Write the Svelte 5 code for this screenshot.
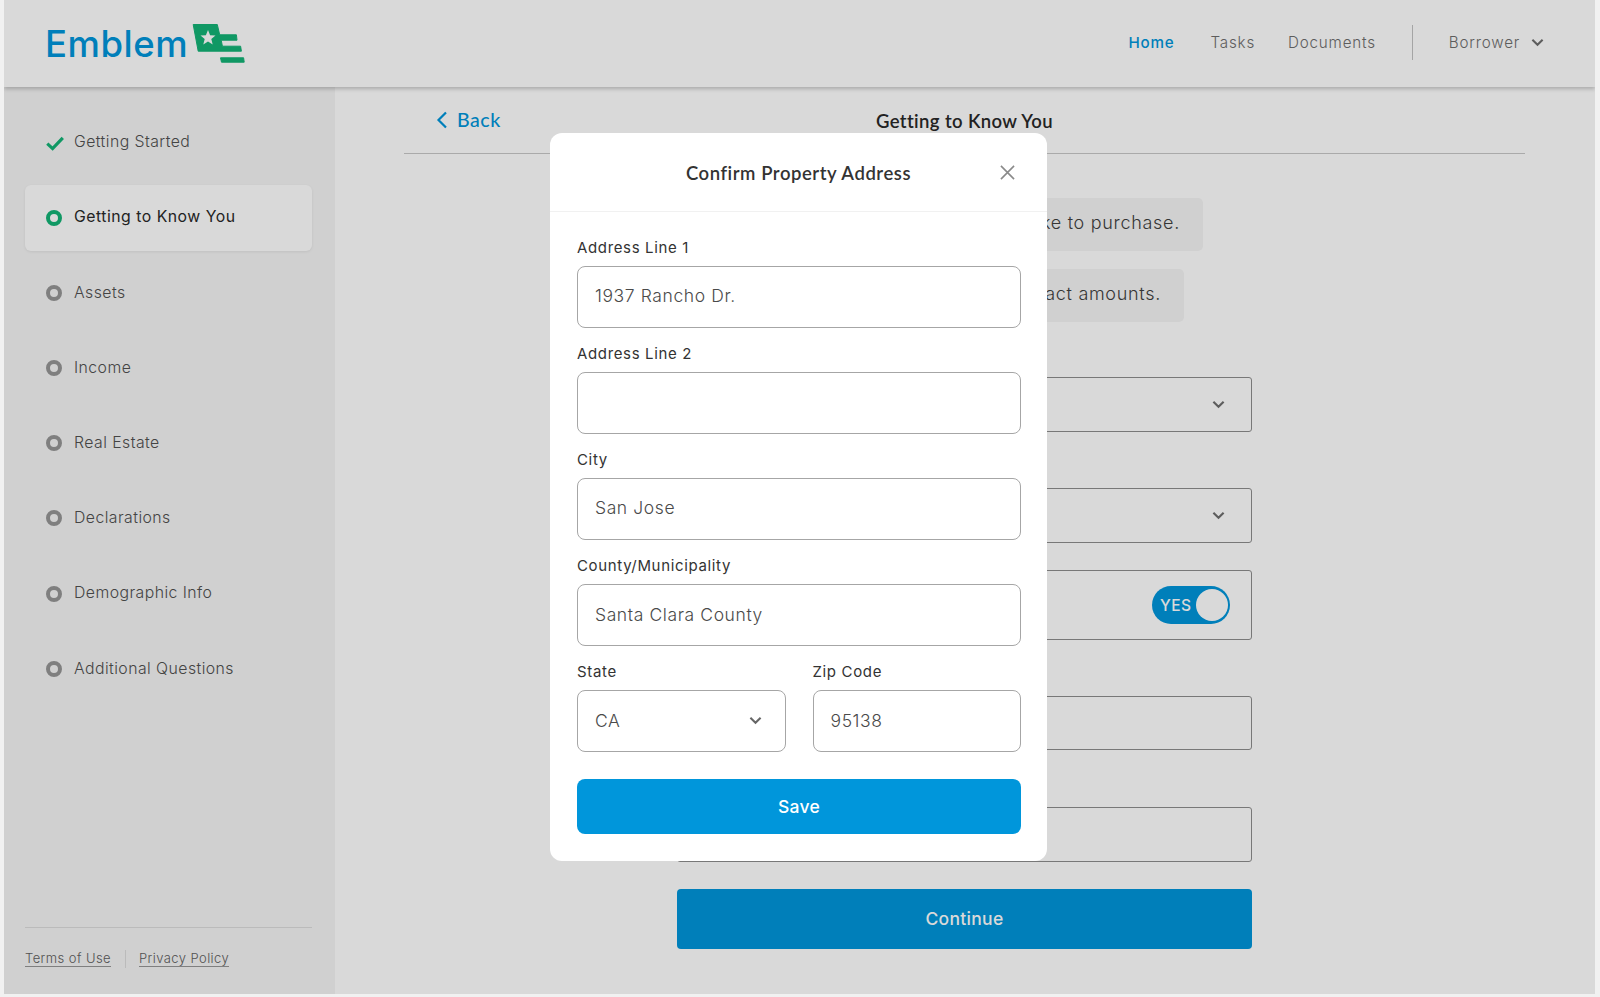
<script>
  const steps = ['Assets', 'Income', 'Real Estate', 'Declarations', 'Demographic Info', 'Additional Questions'];
</script>

{#snippet chevron(cls)}
  <svg class={cls} viewBox="0 0 14 9" aria-hidden="true"><path d="M1.5 1.5 7 7l5.5-5.5" /></svg>
{/snippet}

<div class="app">
  <header class="topbar">
    <div class="logo">
      <span class="wordmark">Emblem</span>
      <svg class="flag" viewBox="0 0 58 46" aria-hidden="true">
        <path class="flag-fill" d="M3.2 4.5H27.3L29.7 14.8H46.4L47 20.2H31.2L32.4 26.2H50.6L51.4 31.2H8.2Z" />
        <path class="flag-fill" d="M30.5 37.8H53.6L54.2 42.2H31.5Z" />
        <polygon class="flag-star" points="18,10 20.1,15.2 25.5,15.5 21.3,19 22.7,24.5 18,21.5 13.3,24.5 14.7,19 10.5,15.5 15.9,15.2" />
      </svg>
    </div>
    <nav class="nav">
      <span class="nav-link active">Home</span>
      <span class="nav-link tasks">Tasks</span>
      <span class="nav-link">Documents</span>
      <span class="nav-divider"></span>
      <span class="nav-link">Borrower</span>
      {@render chevron('nav-chevron')}
    </nav>
  </header>

  <div class="body">
    <aside class="sidebar">
      <ul class="steps">
        <li class="step">
          <svg class="check" viewBox="0 0 18 15" aria-hidden="true"><path d="M1.3 7.6 6.6 12.6 16.8 1.8" /></svg>
          <span class="step-name">Getting Started</span>
        </li>
        <li class="step current"><span class="dot"></span><span class="step-name">Getting to Know You</span></li>
        {#each steps as step}
          <li class="step"><span class="dot"></span><span class="step-name">{step}</span></li>
        {/each}
      </ul>
      <footer class="legal">
        <span class="legal-link">Terms of Use</span>
        <span class="legal-sep"></span>
        <span class="legal-link">Privacy Policy</span>
      </footer>
    </aside>

    <main class="main">
      <div class="page-head">
        <div class="back">
          <svg viewBox="0 0 12 18" aria-hidden="true"><path d="M10 1.5 2.5 9l7.5 7.5" /></svg>
          <span>Back</span>
        </div>
        <h1>Getting to Know You</h1>
      </div>
      <div class="form">
        <p class="banner one">Tell us about the home you'd like to purchase.</p>
        <p class="banner two">Don't worry, we don't need exact amounts.</p>
        <div class="box b1">{@render chevron('box-chevron')}</div>
        <div class="box b2">{@render chevron('box-chevron')}</div>
        <div class="box b3">
          <div class="toggle"><span>YES</span><i></i></div>
        </div>
        <div class="box b4"></div>
        <div class="box b5"></div>
        <button class="continue">Continue</button>
      </div>
    </main>
  </div>

  <div class="backdrop">
    <section class="modal">
      <div class="modal-head">
        <h2>Confirm Property Address</h2>
        <svg class="close" viewBox="0 0 16 16" aria-hidden="true"><path d="M1 1 15 15M15 1 1 15" /></svg>
      </div>
      <div class="modal-body">
        <div class="field"><span class="label">Address Line 1</span><div class="input">1937 Rancho Dr.</div></div>
        <div class="field"><span class="label">Address Line 2</span><div class="input"></div></div>
        <div class="field"><span class="label">City</span><div class="input">San Jose</div></div>
        <div class="field"><span class="label">County/Municipality</span><div class="input">Santa Clara County</div></div>
        <div class="row">
          <div class="field"><span class="label">State</span><div class="input select">CA{@render chevron('select-chevron')}</div></div>
          <div class="field"><span class="label">Zip Code</span><div class="input">95138</div></div>
        </div>
        <button class="save">Save</button>
      </div>
    </section>
  </div>
</div>

<style>
  :global(body) {
    margin: 0;
    background: #f1f1f1;
    font-family: Inter, "Liberation Sans", sans-serif;
  }
  .app {
    position: relative;
    width: 1591px;
    height: 994px;
    margin-left: 4px;
    display: flex;
    flex-direction: column;
    background: #fff;
    overflow: hidden;
    color: #505050;
  }
  svg { display: block; fill: none; }

  .topbar {
    position: relative;
    z-index: 1;
    flex: none;
    height: 87px;
    display: flex;
    align-items: center;
    justify-content: space-between;
    background: #fff;
    box-shadow: 0 2px 4px rgba(0, 0, 0, .22);
    padding-left: 41px;
    padding-right: 51px;
    box-sizing: border-box;
  }
  .logo { display: flex; align-items: flex-start; height: 46px; margin-top: -2px; }
  .wordmark {
    font-size: 36.5px;
    line-height: 46px;
    color: #0096db;
    font-weight: 500;
    letter-spacing: .5px;
    margin-top: 1px;
    width: 145px;
  }
  .flag { width: 58px; height: 46px; }
  .flag-fill { fill: #13b376; stroke: #13b376; stroke-width: 1; stroke-linejoin: round; }
  .flag-star { fill: #fff; }

  .nav { display: flex; align-items: center; font-size: 15.2px; font-weight: 300; color: #6e6e6e; letter-spacing: .8px; margin-top: -2px; }
  .nav-link { margin-right: 36px; }
  .nav-link.tasks { margin-right: 33px; }
  .nav-link.active { color: #0096db; font-weight: 500; letter-spacing: .75px; }
  .nav-link:nth-child(5) { margin-right: 11px; }
  .nav-divider { width: 1px; height: 35px; background: #c2c2c2; margin-right: 36px; }
  :global(.nav-chevron) { width: 13px; height: 9px; stroke: #6e6e6e; stroke-width: 2.2; }

  .body { flex: 1; display: flex; min-height: 0; }
  .sidebar {
    flex: none;
    width: 331px;
    box-sizing: border-box;
    background: #f5f5f5;
    padding: 22.5px 23px 0 21px;
    display: flex;
    flex-direction: column;
    justify-content: space-between;
  }
  .steps { list-style: none; margin: 0; padding: 0; display: flex; flex-direction: column; gap: 9.2px; }
  .step {
    height: 66px;
    display: flex;
    align-items: center;
    gap: 12px;
    padding-left: 21px;
    border-radius: 6px;
    font-size: 15.8px;
    font-weight: 300;
    letter-spacing: .45px;
  }
  .step-name { margin-top: -1.5px; }
  .step.current { background: #fff; color: #282828; font-weight: 400; letter-spacing: .5px; box-shadow: 0 1px 3px rgba(0, 0, 0, .08); }
  .dot {
    width: 16px;
    height: 16px;
    box-sizing: border-box;
    border: 4px solid #969696;
    border-radius: 50%;
    flex: none;
  }
  .current .dot { border-color: #13b376; }
  .check { width: 18px; height: 15px; stroke: #13b376; stroke-width: 3.2; margin: 1px -2px 0 0; flex: none; }

  .legal {
    border-top: 1px solid #dcdcdc;
    height: 67px;
    box-sizing: border-box;
    padding-top: 22px;
    display: flex;
    align-items: flex-start;
    font-size: 13px;
    font-weight: 300;
    letter-spacing: .42px;
    color: #606060;
  }
  .legal-link { border-bottom: 1px solid #969696; line-height: 16px; }
  .legal-sep { width: 1px; height: 18px; background: #dcdcdc; margin: 0 13px 0 14px; }

  .main { flex: 1; padding: 0 70px 0 69px; min-width: 0; }
  .page-head {
    height: 67px;
    box-sizing: border-box;
    border-bottom: 1px solid #c8c8c8;
    display: grid;
    grid-template-columns: 1fr auto 1fr;
    align-items: center;
  }
  .back {
    display: flex;
    align-items: center;
    gap: 9px;
    padding-left: 32px;
    color: #0096db;
    font: 500 19.5px/1 Lato, sans-serif;
    letter-spacing: .55px;
  }
  .back svg { width: 12px; height: 18px; stroke: #0096db; stroke-width: 2.2; }
  h1 {
    margin: 2px 0 0;
    font: 600 18.5px/1 Lato, sans-serif;
    letter-spacing: .38px;
    color: #282828;
  }
  .form { width: 575px; margin: 44px auto 0; display: flex; flex-direction: column; align-items: center; }
  .banner {
    margin: 0;
    height: 53px;
    display: flex;
    align-items: center;
    justify-content: flex-end;
    box-sizing: border-box;
    padding: 0 23px 4px 0;
    white-space: nowrap;
    background: #f5f5f5;
    border-radius: 5px;
    font-size: 18px;
    font-weight: 300;
    letter-spacing: .7px;
    color: #3f3f3f;
  }
  .banner.one { width: 477px; }
  .banner.two { width: 439px; margin-top: 18px; }
  .box {
    align-self: stretch;
    box-sizing: border-box;
    border: 1px solid #8e8e8e;
    border-radius: 3px;
    display: flex;
    align-items: center;
    justify-content: flex-end;
    padding-right: 26px;
  }
  :global(.box-chevron) { width: 13px; height: 9px; stroke: #6e6e6e; stroke-width: 2.3; }
  .b1 { height: 55px; margin-top: 55px; }
  .b2 { height: 55px; margin-top: 56px; }
  .b3 { height: 70px; margin-top: 27px; padding-right: 21px; }
  .b4 { height: 54px; margin-top: 56px; }
  .b5 { height: 55px; margin-top: 57px; }
  .toggle {
    width: 78px;
    height: 38px;
    box-sizing: border-box;
    border-radius: 19px;
    background: #0096db;
    display: flex;
    align-items: center;
    justify-content: space-between;
    padding: 0 2px 0 8px;
    color: #fff;
    font-size: 15.5px;
    font-weight: 500;
    letter-spacing: .4px;
  }
  .toggle i { width: 32px; height: 32px; border-radius: 50%; background: #fff; }
  button {
    border: 0;
    font-family: inherit;
    color: #fff;
    background: #0096db;
    font-size: 17.5px;
    font-weight: 500;
    letter-spacing: .3px;
    padding: 0;
  }
  .continue { align-self: stretch; height: 60px; margin-top: 27px; padding-bottom: 2px; border-radius: 4px; }

  .backdrop {
    position: absolute;
    inset: 0;
    z-index: 2;
    background: rgba(0, 0, 0, .15);
    padding: 133px 0 0 546px;
    box-sizing: border-box;
  }
  .modal {
    width: 497px;
    height: 728px;
    background: #fff;
    border-radius: 12px;
    box-sizing: border-box;
  }
  .modal-head {
    height: 79px;
    box-sizing: border-box;
    border-bottom: 1px solid #f1f1f1;
    display: grid;
    grid-template-columns: 1fr auto 1fr;
    align-items: center;
    padding: 0 32px;
  }
  h2 {
    grid-column: 2;
    margin: 3px 0 0;
    font: 600 18.5px/1 Lato, sans-serif;
    letter-spacing: .55px;
    color: #333;
  }
  .close { grid-column: 3; justify-self: end; width: 15px; height: 15px; stroke: #8a8a8a; stroke-width: 1.7; }
  .modal-body { padding: 25.5px 26px 0 27px; display: flex; flex-direction: column; gap: 16.1px; }
  .field { display: flex; flex-direction: column; gap: 8px; min-width: 0; flex: 1; }
  .label { font-size: 15px; line-height: 20px; color: #333; font-weight: 400; letter-spacing: .65px; }
  .input {
    height: 62px;
    box-sizing: border-box;
    border: 1px solid #a6a6a6;
    border-radius: 8px;
    padding: 0 17px 1.5px;
    display: flex;
    align-items: center;
    justify-content: space-between;
    font-size: 17.5px;
    font-weight: 300;
    letter-spacing: .6px;
    color: #4a4a4a;
  }
  :global(.select-chevron) { width: 13px; height: 9px; stroke: #666; stroke-width: 2.2; margin-right: 6px; }
  .row { display: flex; gap: 27px; }
  .save { height: 55px; border-radius: 8px; margin-top: 11.3px; }
</style>
